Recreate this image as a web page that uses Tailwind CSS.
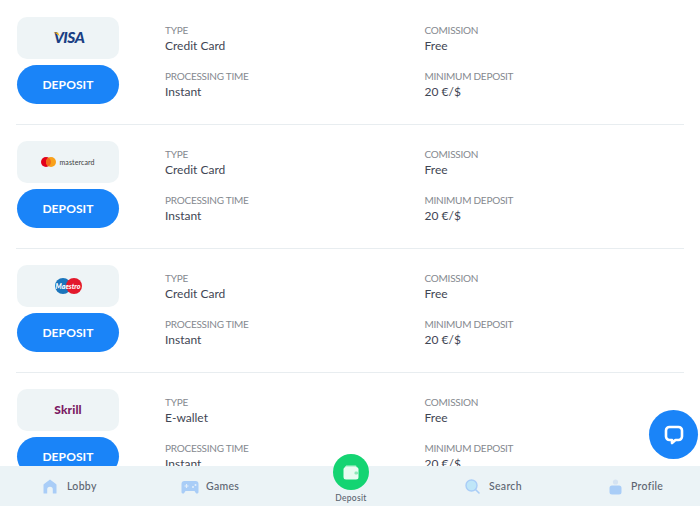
<!DOCTYPE html>
<html lang="en">
<head>
  <meta charset="UTF-8" />
  <title>Deposit</title>
  <script src="https://cdn.jsdelivr.net/npm/@tailwindcss/browser@4"></script>
</head>
<body class="bg-white font-['Lato',sans-serif] text-[#3f4654]">
  <div class="relative h-[506px] w-[700px] overflow-hidden bg-white">
    <div class="px-4 pt-px">

      <!-- visa -->
      <div class="flex h-[124px] border-b border-[#e8edf0] pl-px pt-[16px]">
        <div class="w-[102px]">
          <div class="relative flex h-[42px] items-center justify-center rounded-[10px] bg-[#eef4f6]">
            <svg class="absolute left-[36px] top-[15px]" width="8" height="6" viewBox="0 0 8 6"><path d="M0.500 0.500h4.500l2 4.500c-1.500-2-3.500-3.500-6.500-4.500z" fill="#f2ae14"/></svg>
            <span class="pl-[2px] text-[15.500px] font-black italic leading-none tracking-[-0.5px] text-[#1a3f84]">VISA</span>
          </div>
          <button class="mt-[6px] h-[39px] w-full rounded-[20px] bg-[#1a84f8] pt-px text-[12px] font-bold tracking-[0.1px] text-white">DEPOSIT</button>
        </div>
        <div class="ml-[46px] grid h-[92px] w-[519px] grid-cols-2 content-start pt-[6px]">
          <div class="h-[46px]"><p class="text-[10px] leading-[15px] tracking-[-0.25px] text-[#85898f]">TYPE</p><p class="text-[12px] leading-[15px]">Credit Card</p></div>
          <div class="h-[46px]"><p class="text-[10px] leading-[15px] tracking-[-0.25px] text-[#85898f]">COMISSION</p><p class="text-[12px] leading-[15px]">Free</p></div>
          <div class="h-[46px]"><p class="text-[10px] leading-[15px] tracking-[-0.25px] text-[#85898f]">PROCESSING TIME</p><p class="text-[12px] leading-[15px]">Instant</p></div>
          <div class="h-[46px]"><p class="text-[10px] leading-[15px] tracking-[-0.25px] text-[#85898f]">MINIMUM DEPOSIT</p><p class="text-[12px] leading-[15px]">20 €/$</p></div>
        </div>
      </div>

      <!-- mastercard -->
      <div class="flex h-[124px] border-b border-[#e8edf0] pl-px pt-[16px]">
        <div class="w-[102px]">
          <div class="flex h-[42px] items-center justify-center gap-[3px] rounded-[10px] bg-[#eef4f6]">
            <svg width="15" height="10" viewBox="0 0 15 10"><circle cx="5" cy="5" r="5" fill="#e3001b"/><circle cx="10" cy="5" r="5" fill="#f9a11b"/><path d="M7.500 .7a5 5 0 0 1 0 8.600a5 5 0 0 1 0-8.600z" fill="#f26a1b"/></svg>
            <span class="text-[7px] font-normal leading-none tracking-[0.1px] text-[#3c3c3c]">mastercard</span>
          </div>
          <button class="mt-[6px] h-[39px] w-full rounded-[20px] bg-[#1a84f8] pt-px text-[12px] font-bold tracking-[0.1px] text-white">DEPOSIT</button>
        </div>
        <div class="ml-[46px] grid h-[92px] w-[519px] grid-cols-2 content-start pt-[6px]">
          <div class="h-[46px]"><p class="text-[10px] leading-[15px] tracking-[-0.25px] text-[#85898f]">TYPE</p><p class="text-[12px] leading-[15px]">Credit Card</p></div>
          <div class="h-[46px]"><p class="text-[10px] leading-[15px] tracking-[-0.25px] text-[#85898f]">COMISSION</p><p class="text-[12px] leading-[15px]">Free</p></div>
          <div class="h-[46px]"><p class="text-[10px] leading-[15px] tracking-[-0.25px] text-[#85898f]">PROCESSING TIME</p><p class="text-[12px] leading-[15px]">Instant</p></div>
          <div class="h-[46px]"><p class="text-[10px] leading-[15px] tracking-[-0.25px] text-[#85898f]">MINIMUM DEPOSIT</p><p class="text-[12px] leading-[15px]">20 €/$</p></div>
        </div>
      </div>

      <!-- maestro -->
      <div class="flex h-[124px] border-b border-[#e8edf0] pl-px pt-[16px]">
        <div class="w-[102px]">
          <div class="relative flex h-[42px] items-center justify-center rounded-[10px] bg-[#eef4f6]">
            <svg width="27" height="16" viewBox="0 0 27 16"><circle cx="8" cy="8" r="8" fill="#1b75bc"/><circle cx="19" cy="8" r="8" fill="#e3192c"/></svg>
            <span class="absolute text-[7px] font-black italic leading-none text-white">Maestro</span>
          </div>
          <button class="mt-[6px] h-[39px] w-full rounded-[20px] bg-[#1a84f8] pt-px text-[12px] font-bold tracking-[0.1px] text-white">DEPOSIT</button>
        </div>
        <div class="ml-[46px] grid h-[92px] w-[519px] grid-cols-2 content-start pt-[6px]">
          <div class="h-[46px]"><p class="text-[10px] leading-[15px] tracking-[-0.25px] text-[#85898f]">TYPE</p><p class="text-[12px] leading-[15px]">Credit Card</p></div>
          <div class="h-[46px]"><p class="text-[10px] leading-[15px] tracking-[-0.25px] text-[#85898f]">COMISSION</p><p class="text-[12px] leading-[15px]">Free</p></div>
          <div class="h-[46px]"><p class="text-[10px] leading-[15px] tracking-[-0.25px] text-[#85898f]">PROCESSING TIME</p><p class="text-[12px] leading-[15px]">Instant</p></div>
          <div class="h-[46px]"><p class="text-[10px] leading-[15px] tracking-[-0.25px] text-[#85898f]">MINIMUM DEPOSIT</p><p class="text-[12px] leading-[15px]">20 €/$</p></div>
        </div>
      </div>

      <!-- skrill -->
      <div class="flex h-[124px] pl-px pt-[16px]">
        <div class="w-[102px]">
          <div class="flex h-[42px] items-center justify-center rounded-[10px] bg-[#eef4f6]">
            <span class="text-[12px] font-black leading-none tracking-[0.1px] text-[#7b1a63]">Skrill</span>
          </div>
          <button class="mt-[6px] h-[39px] w-full rounded-[20px] bg-[#1a84f8] pt-px text-[12px] font-bold tracking-[0.1px] text-white">DEPOSIT</button>
        </div>
        <div class="ml-[46px] grid h-[92px] w-[519px] grid-cols-2 content-start pt-[6px]">
          <div class="h-[46px]"><p class="text-[10px] leading-[15px] tracking-[-0.25px] text-[#85898f]">TYPE</p><p class="text-[12px] leading-[15px]">E-wallet</p></div>
          <div class="h-[46px]"><p class="text-[10px] leading-[15px] tracking-[-0.25px] text-[#85898f]">COMISSION</p><p class="text-[12px] leading-[15px]">Free</p></div>
          <div class="h-[46px]"><p class="text-[10px] leading-[15px] tracking-[-0.25px] text-[#85898f]">PROCESSING TIME</p><p class="text-[12px] leading-[15px]">Instant</p></div>
          <div class="h-[46px]"><p class="text-[10px] leading-[15px] tracking-[-0.25px] text-[#85898f]">MINIMUM DEPOSIT</p><p class="text-[12px] leading-[15px]">20 €/$</p></div>
        </div>
      </div>
    </div>

    <!-- chat bubble -->
    <button class="absolute left-[649px] top-[410px] flex h-[49px] w-[49px] items-center justify-center rounded-full bg-[#1a84f8]">
      <svg width="20" height="20" viewBox="0 0 20 20"><path d="M5.500 2h9a3.500 3.500 0 0 1 3.500 3.500v6a3.500 3.500 0 0 1-3.500 3.500h-3l-3.500 3v-3h-2.500a3.500 3.500 0 0 1-3.500-3.500v-6a3.500 3.500 0 0 1 3.500-3.500z" fill="#1a84f8" stroke="#fff" stroke-width="2.600" stroke-linejoin="round"/></svg>
    </button>

    <!-- bottom nav -->
    <nav class="absolute bottom-0 left-0 h-[40px] w-full bg-[#ebf3f6] text-[10.500px] font-medium tracking-[0.3px] text-[#5c6470]">
      <div class="absolute left-[43px] top-[13px] flex items-center gap-[10px]">
        <svg width="14" height="15" viewBox="0 0 14 15"><path d="M7 0.500l6 4.500a1 1 0 0 1 .5 1v8a.5.5 0 0 1-.5.5h-3.200v-4a2.800 2.800 0 0 0-5.600 0v4h-3.200a.5.5 0 0 1-.5-.5v-8a1 1 0 0 1 .5-1z" fill="#a9cdf7"/></svg>
        <span>Lobby</span>
      </div>
      <div class="absolute left-[181px] top-[13px] flex items-center gap-[7px]">
        <svg width="18" height="14" viewBox="0 0 18 14"><path d="M3.500 1h11a3 3 0 0 1 3 3v8a1.500 1.500 0 0 1-2.700.900l-1.300-1.900h-9l-1.300 1.900a1.500 1.500 0 0 1-2.700-.900v-8a3 3 0 0 1 3-3z" fill="#a9cdf7"/><path d="M3.500 6h4M5.500 4v4" stroke="#e3eefa" stroke-width="1.200"/><circle cx="12" cy="7" r="1" fill="#e3eefa"/><circle cx="14.500" cy="5" r="1" fill="#e3eefa"/></svg>
        <span>Games</span>
      </div>
      <div class="absolute left-[333px] top-[-12px] flex w-[36px] flex-col items-center">
        <div class="flex h-[36px] w-[36px] shrink-0 items-center justify-center rounded-full bg-[#14d472]">
          <svg width="16" height="15" viewBox="0 0 16 15"><path d="M3 0.500h9.500a1 1 0 0 1 1 1v1.500h-10.500a1 1 0 0 1 0-2z" fill="#b9f3d3"/><rect x="0.500" y="2" width="15" height="12.500" rx="2.500" fill="#e8fbf1"/><rect x="11.500" y="6.500" width="3.500" height="3" rx="1.200" fill="#8fe8b8"/></svg>
        </div>
        <span class="mt-[3px] text-[8.500px] leading-[10px] tracking-[0.3px]">Deposit</span>
      </div>
      <div class="absolute left-[465px] top-[13px] flex items-center gap-[9px]">
        <svg width="15" height="15" viewBox="0 0 15 15"><circle cx="6.500" cy="6.500" r="5.500" fill="#bfe6f8" stroke="#a9cdf7" stroke-width="1.400"/><path d="M10.500 10.500l3.500 3.500" stroke="#a9cdf7" stroke-width="1.600" stroke-linecap="round"/></svg>
        <span>Search</span>
      </div>
      <div class="absolute left-[609px] top-[13px] flex items-center gap-[9px]">
        <svg width="13" height="16" viewBox="0 0 13 16"><circle cx="6.500" cy="3" r="2.600" fill="#d5e3f2"/><path d="M3 6.500h7a2.500 2.500 0 0 1 2.500 2.500v4a2.500 2.500 0 0 1-2.500 2.500h-7a2.500 2.500 0 0 1-2.500-2.500v-4a2.500 2.500 0 0 1 2.500-2.500z" fill="#a9cdf7"/></svg>
        <span>Profile</span>
      </div>
    </nav>
  </div>
</body>
</html>
